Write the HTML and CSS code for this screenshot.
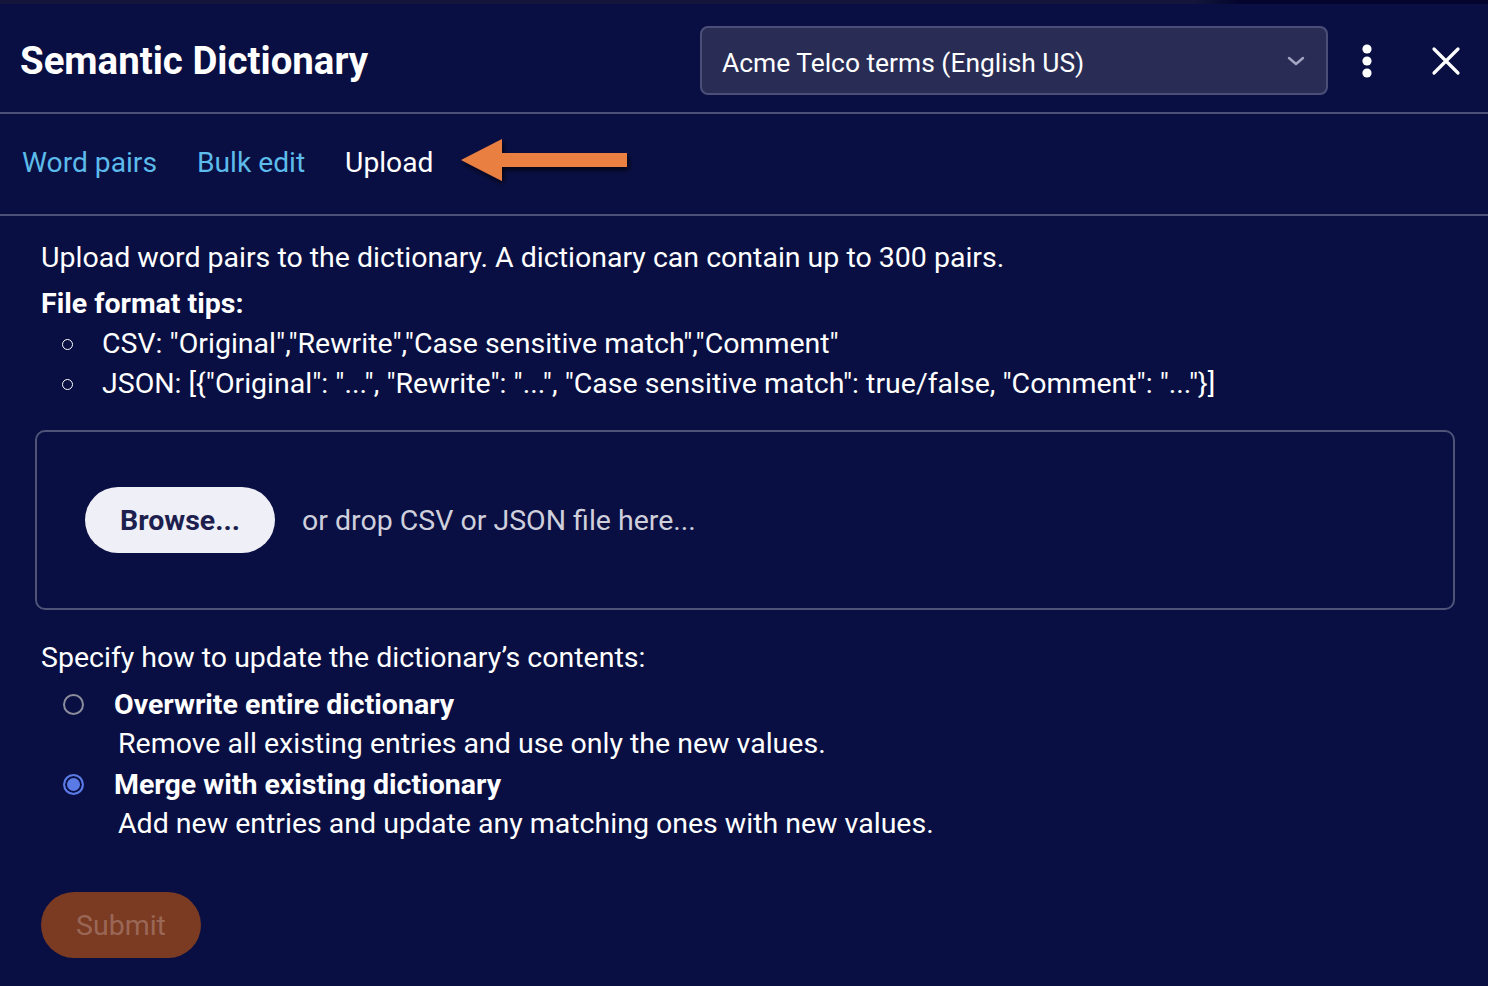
FILE: index.html
```html
<!doctype html>
<html>
  <head>
    <meta charset="utf-8">
    <title>Semantic Dictionary</title>
    <link rel="stylesheet" href="styles.css">
  </head>
  <body>
    <div class="top-strip"></div>
    <header class="dialog-head">
      <h1>Semantic Dictionary</h1>
      <div class="dict-select">
        <span>Acme Telco terms (English US)</span>
        <svg class="chevron" width="20" height="12" viewBox="0 0 20 12"><path d="M3 3 L10 9 L17 3" fill="none" stroke="#a3a6c2" stroke-width="2.4" stroke-linecap="round" stroke-linejoin="round"/></svg>
      </div>
      <button class="icon-btn kebab" aria-label="More">
        <svg width="12" height="34" viewBox="0 0 12 34"><circle cx="6" cy="5" r="4.6" fill="#fff"/><circle cx="6" cy="17" r="4.6" fill="#fff"/><circle cx="6" cy="29" r="4.6" fill="#fff"/></svg>
      </button>
      <button class="icon-btn close" aria-label="Close">
        <svg width="30" height="30" viewBox="0 0 30 30"><path d="M3 3 L27 27 M27 3 L3 27" stroke="#fff" stroke-width="3.2" stroke-linecap="round"/></svg>
      </button>
    </header>

    <nav class="tabs">
      <a href="#">Word pairs</a>
      <a href="#">Bulk edit</a>
      <a href="#" class="current">Upload</a>
      <svg class="pointer" width="172" height="50" viewBox="0 0 172 50">
        <defs>
          <filter id="shadow" x="-10%" y="-30%" width="130%" height="180%">
            <feDropShadow dx="2" dy="3" stdDeviation="2.5" flood-color="#000" flood-opacity="0.7"/>
          </filter>
        </defs>
        <path d="M0 21 L41 0 L41 14 L166 14 L166 28 L41 28 L41 42 Z" fill="#ea7f43" filter="url(#shadow)"/>
      </svg>
    </nav>

    <main class="upload">
      <p class="intro">Upload word pairs to the dictionary. A dictionary can contain up to 300 pairs.</p>
      <p class="tips-title">File format tips:</p>
      <ul class="tips">
        <li>CSV: "Original","Rewrite","Case sensitive match","Comment"</li>
        <li>JSON: [{"Original": "...", "Rewrite": "...", "Case sensitive match": true/false, "Comment": "..."}]</li>
      </ul>

      <div class="dropzone">
        <button class="browse">Browse...</button>
        <span class="drop-hint">or drop CSV or JSON file here...</span>
      </div>

      <p class="mode-title">Specify how to update the dictionary’s contents:</p>
      <label class="option">
        <span class="radio"></span>
        <span class="option-name">Overwrite entire dictionary</span>
      </label>
      <p class="option-desc">Remove all existing entries and use only the new values.</p>
      <label class="option">
        <span class="radio checked"></span>
        <span class="option-name">Merge with existing dictionary</span>
      </label>
      <p class="option-desc">Add new entries and update any matching ones with new values.</p>

      <button class="submit" disabled>Submit</button>
    </main>
  </body>
</html>
```

FILE: styles.css
```css
body {
  margin: 0;
  background: #090f42;
  color: #fff;
  font-family: Roboto, "Liberation Sans", sans-serif;
  font-size: 28.5px;
  height: 986px;
  overflow: hidden;
}

.top-strip {
  height: 4px;
  background: linear-gradient(to right, #13163a 0, #13163a 1195px, #03052e 1240px, #03052e 100%);
}

.dialog-head {
  display: flex;
  align-items: center;
  height: 108px;
  padding: 0 0 0 20px;
  border-bottom: 2px solid #4c5078;
}

.dialog-head h1 {
  margin: 0;
  font-size: 38.4px;
  font-weight: 700;
  margin-top: 4px;
}

.dict-select {
  box-sizing: border-box;
  margin-left: auto;
  width: 628px;
  height: 69px;
  display: flex;
  align-items: center;
  justify-content: space-between;
  padding: 4px 20px 0 20px;
  background: #292d56;
  border: 2px solid #4b4f78;
  border-radius: 8px;
  font-size: 26.4px;
  margin-top: 5px;
}

.chevron {
  margin-top: -4px;
}

.icon-btn {
  background: none;
  border: 0;
  padding: 0;
  display: flex;
  align-items: center;
  justify-content: center;
}

.kebab {
  width: 32px;
  margin-left: 23px;
  margin-top: 5px;
}

.close {
  width: 40px;
  margin-left: 43px;
  margin-right: 22px;
  margin-top: 5px;
}

.tabs {
  display: flex;
  align-items: center;
  height: 96px;
  padding-left: 22px;
  padding-bottom: 4px;
  border-bottom: 2px solid #4c5078;
}

.tabs a {
  color: #5cbbea;
  text-decoration: none;
  margin-right: 40px;
  font-size: 28.2px;
}

.tabs a.current {
  color: #fff;
  margin-right: 28px;
}

.pointer {
  margin-top: 4px;
}

.upload {
  padding: 22px 0 0 41px;
}

.upload p {
  margin: 0;
  line-height: 40px;
}

.tips-title {
  font-weight: 700;
  margin-top: 6px !important;
}

.tips {
  margin: 0;
  padding-left: 61px;
  list-style: none;
  line-height: 40px;
}

.tips li {
  position: relative;
}

.tips li::before {
  content: "";
  position: absolute;
  left: -40px;
  top: 15px;
  width: 9px;
  height: 9px;
  border: 1.5px solid #fff;
  border-radius: 50%;
}

.dropzone {
  display: flex;
  align-items: center;
  margin: 26px 33px 0 -6px;
  height: 176px;
  padding-left: 48px;
  border: 2px solid #4f5378;
  border-radius: 10px;
}

.browse {
  width: 190px;
  height: 66px;
  border: 0;
  border-radius: 33px;
  background: #eff0f7;
  color: #1d1f4e;
  font-family: Roboto, "Liberation Sans", sans-serif;
  font-size: 28.5px;
  font-weight: 700;
}

.drop-hint {
  margin-left: 27px;
  color: #cfd0dc;
  font-size: 28.5px;
}

.mode-title {
  margin-top: 28px !important;
}

.option {
  display: flex;
  align-items: center;
  height: 40px;
  margin-top: 6px;
}

.option + .option-desc + .option {
  margin-top: 0;
}

.radio {
  width: 17px;
  height: 17px;
  border: 2px solid #8c8d9c;
  border-radius: 50%;
  margin-left: 22px;
  margin-right: 30px;
  box-sizing: content-box;
}

.radio.checked {
  border-color: #5a7ae6;
  background: #5a7ae6;
  box-shadow: inset 0 0 0 2px #090f42;
}

.option-name {
  font-weight: 700;
}

.option-desc {
  padding-left: 77px;
}

.submit {
  margin-top: 48px;
  width: 160px;
  height: 66px;
  border: 0;
  border-radius: 33px;
  background: #7a3b22;
  color: #9a6757;
  font-family: Roboto, "Liberation Sans", sans-serif;
  font-size: 28.5px;
}
```
